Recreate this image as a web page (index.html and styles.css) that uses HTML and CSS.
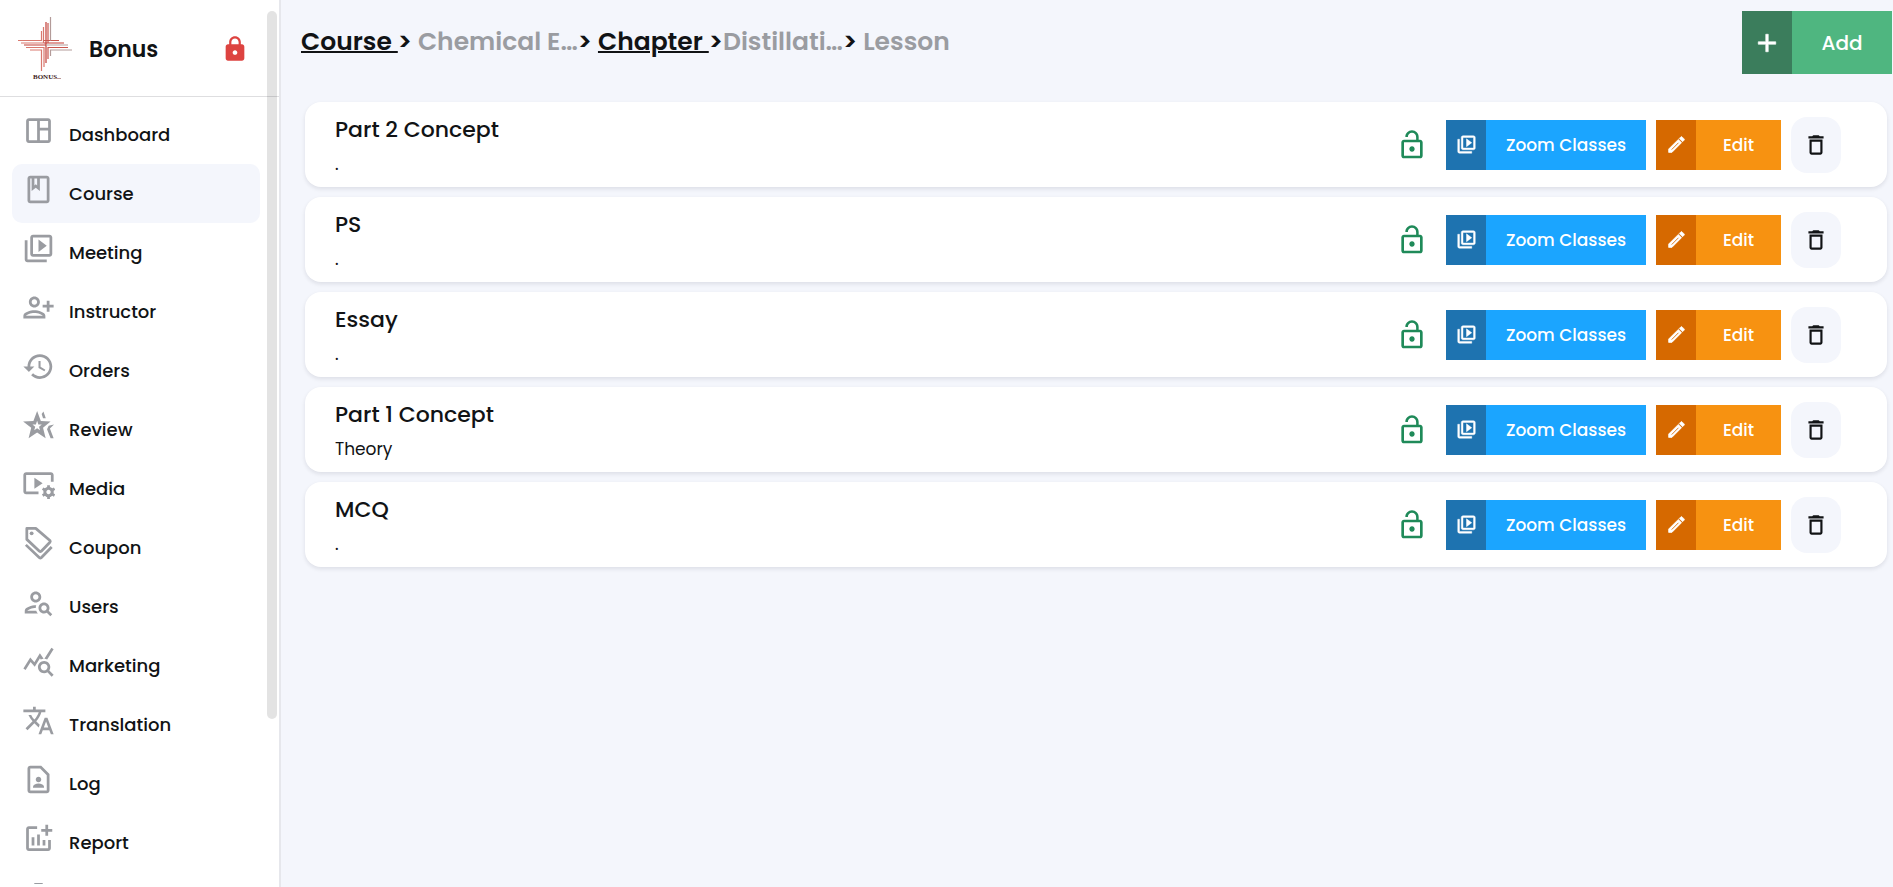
FILE: index.html
```html
<!DOCTYPE html>
<html lang="en">
	<head>
		<meta charset="UTF-8" />
		<meta name="viewport" content="width=device-width, initial-scale=1.0" />
		<title>Bonus - Lesson</title>
		<link rel="stylesheet" href="styles.css">
	</head>
	<body>
		<!-- Icon sprite -->
		<svg class="sprite" aria-hidden="true">
			<symbol id="i-dashboard" viewBox="0 0 24 24"><path d="M19 3H5c-1.100 0-2 .9-2 2v14c0 1.100.9 2 2 2h14c1.100 0 2-.9 2-2V5c0-1.100-.9-2-2-2zM5 19V5h6v14H5zm14 0h-6v-7h6v7zm0-9h-6V5h6v5z"/></symbol>
			<symbol id="i-course" viewBox="0 0 24 24"><path d="M18 2H6c-1.100 0-2 .9-2 2v16c0 1.100.9 2 2 2h12c1.100 0 2-.9 2-2V4c0-1.100-.9-2-2-2zM9 4h2v5l-1-.75L9 9V4zm9 16H6V4h1v9l3-2.250L13 13V4h5v16z"/></symbol>
			<symbol id="i-video" viewBox="0 0 24 24"><path d="M4 6H2v14c0 1.100.9 2 2 2h14v-2H4V6zm16-4H8c-1.100 0-2 .9-2 2v12c0 1.100.9 2 2 2h12c1.100 0 2-.9 2-2V4c0-1.100-.9-2-2-2zm0 14H8V4h12v12zM12 5.500v9l6-4.500z"/></symbol>
			<symbol id="i-person-add" viewBox="0 0 24 24"><path d="M9 12c2.210 0 4-1.790 4-4s-1.790-4-4-4-4 1.790-4 4 1.790 4 4 4zm0-6c1.100 0 2 .9 2 2s-.9 2-2 2-2-.9-2-2 .9-2 2-2zm0 8c-2.670 0-8 1.340-8 4v2h16v-2c0-2.660-5.330-4-8-4zm-6 4c.22-.72 3.310-2 6-2 2.700 0 5.800 1.290 6 2H3zM20 10V7h-2v3h-3v2h3v3h2v-3h3v-2z"/></symbol>
			<symbol id="i-history" viewBox="0 0 24 24"><path d="M13 3c-4.970 0-9 4.030-9 9H1l3.890 3.890.07.14L9 12H6c0-3.870 3.130-7 7-7s7 3.130 7 7-3.130 7-7 7c-1.930 0-3.680-.79-4.940-2.060l-1.420 1.420C8.270 19.990 10.510 21 13 21c4.970 0 9-4.030 9-9s-4.030-9-9-9zm-1 5v5l4.280 2.540.72-1.210-3.500-2.080V8H12z"/></symbol>
			<symbol id="i-review" viewBox="0 0 24 24"><path fill-rule="evenodd" d="M11 1.500l2.700 7.300 7.100.3-5.500 4.500 1.900 7.600-6.200-4.100-6.200 4.100 1.900-7.600L.8 9.100l7.500-.3zM11 8.600l-.9 2.600-2.500.1 2 1.600-.7 2.600 2.100-1.500 2.100 1.500-.7-2.600 2-1.600-2.500-.1z"/><path d="M14.300 3.700L15.600 1.800l1.700 4.900h-2zM23.300 11.300l-3 2.900 2.700 7h-2.200l-2.600-6.400 1.200-2.700z"/></symbol>
			<symbol id="i-media" viewBox="0 0 24 24"><path d="M21 3H3c-1.100 0-2 .9-2 2v12c0 1.100.9 2 2 2h9v-2H3V5h18v5h2V5c0-1.100-.9-2-2-2zM9 7v8l6-4z"/><path fill="none" stroke="currentColor" stroke-width="2.200" d="M22 17.500a2.700 2.700 0 1 1-5.400 0a2.700 2.700 0 1 1 5.400 0z"/><path fill="none" stroke="currentColor" stroke-width="2" d="M19.300 12.500v2M19.300 20.500v2M15 15l1.700 1M22 19l1.700 1M15 20l1.700-1M22 16l1.700-1"/></symbol>
			<symbol id="i-coupon" viewBox="0 0 24 24"><path fill="none" stroke="currentColor" stroke-width="2" stroke-linejoin="round" d="M3.500 1H10L20.300 9.800a1 1 0 0 1 0 1.300L14 17.600a1 1 0 0 1-1.300 0L3.500 9z"/><circle cx="7" cy="4.600" r="1.400"/><path fill="none" stroke="currentColor" stroke-width="2" d="M2.800 13l9.900 9.400a1 1 0 0 0 1.300 0l7.600-7.800"/></symbol>
			<symbol id="i-users" viewBox="0 0 24 24"><path d="M10 12c2.210 0 4-1.790 4-4s-1.790-4-4-4-4 1.790-4 4 1.790 4 4 4zm0-6c1.100 0 2 .9 2 2s-.9 2-2 2-2-.9-2-2 .9-2 2-2zM4 18c.22-.72 3.310-2 6-2 0-.7.130-1.370.350-1.990C7.620 13.910 2 15.270 2 18v2h9.540c-.52-.58-.93-1.250-1.190-2H4zm15.430.02c.36-.59.57-1.280.57-2.020 0-2.210-1.790-4-4-4s-4 1.790-4 4 1.790 4 4 4c.74 0 1.430-.22 2.020-.57L20.590 22 22 20.590l-2.570-2.570zM16 18c-1.100 0-2-.9-2-2s.9-2 2-2 2 .9 2 2-.9 2-2 2z"/></symbol>
			<symbol id="i-marketing" viewBox="0 0 24 24"><path d="M19.880 18.470c.44-.7.700-1.510.700-2.390 0-2.490-2.010-4.500-4.500-4.500s-4.500 2.010-4.500 4.500 2.010 4.500 4.490 4.500c.88 0 1.700-.26 2.390-.7L21.580 23 23 21.580l-3.120-3.110zm-3.800.11c-1.380 0-2.500-1.120-2.500-2.500s1.120-2.500 2.500-2.500 2.500 1.120 2.500 2.500-1.120 2.500-2.500 2.500zm-.36-8.500c-.74.02-1.450.18-2.100.45l-.55-.83-3.800 6.180-3.010-3.520-3.630 5.810L1 17l5-8 3 3.500L13 6l2.720 4.080zm2.590.5c-.64-.28-1.330-.45-2.050-.49L21.380 2 23 3.180l-4.690 7.400z"/></symbol>
			<symbol id="i-translate" viewBox="0 0 24 24"><path d="M12.870 15.070l-2.540-2.510.03-.03c1.740-1.940 2.980-4.170 3.710-6.530H17V4h-7V2H8v2H1v1.990h11.170C11.500 7.920 10.440 9.750 9 11.350 8.070 10.320 7.300 9.190 6.690 8h-2c.73 1.630 1.730 3.170 2.980 4.560l-5.090 5.020L4 19l5-5 3.110 3.110.76-2.040zM18.500 10h-2L12 22h2l1.120-3h4.750L21 22h2l-4.500-12zm-2.620 7l1.620-4.330L19.120 17h-3.240z"/></symbol>
			<symbol id="i-log" viewBox="0 0 24 24"><path d="M14 2H6c-1.100 0-2 .9-2 2v16c0 1.100.9 2 2 2h12c1.100 0 2-.9 2-2V8l-6-6zm4 18H6V4h7.170L18 8.830V20zM12 14c1.100 0 2-.9 2-2s-.9-2-2-2-2 .9-2 2 .9 2 2 2zm4 3.430c0-.81-.48-1.530-1.220-1.850a6.950 6.950 0 0 0-5.560 0A2.010 2.010 0 0 0 8 17.430V18h8v-.57z"/></symbol>
			<symbol id="i-report" viewBox="0 0 24 24"><path d="M22 5v2h-3v3h-2V7h-3V5h3V2h2v3h3zM19 19H5V5h6V3H5c-1.100 0-2 .9-2 2v14c0 1.100.9 2 2 2h14c1.100 0 2-.9 2-2v-6h-2v6zM15 13v4h2v-4h-2zm-4 4h2V9h-2v8zm-2 0v-6H7v6h2z"/></symbol>
			<symbol id="i-settings" viewBox="0 0 24 24"><path fill-rule="evenodd" d="M9 1.500h6l.5 3 2 1.200 2.800-1.100 2.500 4.300-2.300 1.900v2.400l2.300 1.900-2.500 4.300-2.800-1.100-2 1.200-.5 3H9l-.5-3-2-1.200-2.800 1.100-2.500-4.300 2.300-1.900v-2.400L1.200 8.900l2.500-4.300 2.800 1.100 2-1.200zM12 8a4 4 0 1 0 0 8 4 4 0 0 0 0-8z"/></symbol>
			<symbol id="i-lock" viewBox="0 0 24 24"><path d="M18 8h-1V6c0-2.760-2.240-5-5-5S7 3.240 7 6v2H6c-1.100 0-2 .9-2 2v10c0 1.100.9 2 2 2h12c1.100 0 2-.9 2-2V10c0-1.100-.9-2-2-2zm-6 9c-1.100 0-2-.9-2-2s.9-2 2-2 2 .9 2 2-.9 2-2 2zm3.100-9H8.900V6c0-1.710 1.390-3.100 3.100-3.100s3.100 1.390 3.100 3.100v2z"/></symbol>
			<symbol id="i-unlock" viewBox="0 0 24 24"><path d="M12 17c1.100 0 2-.9 2-2s-.9-2-2-2-2 .9-2 2 .9 2 2 2zm6-9h-1V6c0-2.760-2.240-5-5-5S7 3.240 7 6h1.900c0-1.710 1.390-3.100 3.100-3.100s3.100 1.390 3.100 3.100v2H6c-1.100 0-2 .9-2 2v10c0 1.100.9 2 2 2h12c1.100 0 2-.9 2-2V10c0-1.100-.9-2-2-2zm0 12H6V10h12v10z"/></symbol>
			<symbol id="i-edit" viewBox="0 0 24 24"><path stroke="currentColor" stroke-width=".8" stroke-linejoin="round" d="M3 17.250V21h3.750L17.810 9.940l-3.750-3.750L3 17.250zM20.710 7.040a1 1 0 0 0 0-1.410l-2.340-2.340a1 1 0 0 0-1.410 0l-1.830 1.830 3.750 3.750 1.830-1.830z"/><path stroke="#d66900" stroke-width="1" d="M6.500 17.800L14.300 10"/></symbol>
			<symbol id="i-delete" viewBox="0 0 24 24"><path d="M6 19c0 1.100.9 2 2 2h8c1.100 0 2-.9 2-2V7H6v12zM8 9h8v10H8V9zm7.500-5l-1-1h-5l-1 1H5v2h14V4h-3.500z"/></symbol>
			<symbol id="i-add" viewBox="0 0 24 24"><path d="M19 13h-6v6h-2v-6H5v-2h6V5h2v6h6v2z"/></symbol>
		</svg>

		<div class="layout">
			<aside class="sidebar">
				<div class="brand">
					<svg class="brand-logo" viewBox="0 0 56 64" role="img" aria-label="Bonus">
						<g fill="none" stroke-width="1.200">
							<path stroke="#d9786e" d="M0 23.500H23.500V14M3 26H25.500V10M23.500 54V33H12M26 50V30.500H8"/>
							<path stroke="#c23f37" d="M6 28H28V5M28 46V28H6M26 26H46"/>
							<path stroke="#c9574e" d="M25.500 23.500H41M30 42V30.500H50M30 6V26"/>
							<path stroke="#b39b99" d="M32.500 0V23.500M32.500 39V33H54M28 28H50"/>
						</g>
						<text class="logo-text" x="15" y="62">BONUS</text>
						<path stroke="#b99" stroke-width="1" d="M38 61.500h5"/>
					</svg>
					<span class="brand-name">Bonus</span>
					<button class="lock-btn" type="button" aria-label="Lock"><svg class="icon"><use href="#i-lock"/></svg></button>
				</div>
				<nav class="menu">
					<a href="#"><svg class="icon"><use href="#i-dashboard"/></svg><span>Dashboard</span></a>
					<a href="#" class="active"><svg class="icon"><use href="#i-course"/></svg><span>Course</span></a>
					<a href="#"><svg class="icon"><use href="#i-video"/></svg><span>Meeting</span></a>
					<a href="#"><svg class="icon"><use href="#i-person-add"/></svg><span>Instructor</span></a>
					<a href="#"><svg class="icon"><use href="#i-history"/></svg><span>Orders</span></a>
					<a href="#"><svg class="icon"><use href="#i-review"/></svg><span>Review</span></a>
					<a href="#"><svg class="icon"><use href="#i-media"/></svg><span>Media</span></a>
					<a href="#"><svg class="icon"><use href="#i-coupon"/></svg><span>Coupon</span></a>
					<a href="#"><svg class="icon"><use href="#i-users"/></svg><span>Users</span></a>
					<a href="#"><svg class="icon"><use href="#i-marketing"/></svg><span>Marketing</span></a>
					<a href="#"><svg class="icon"><use href="#i-translate"/></svg><span>Translation</span></a>
					<a href="#"><svg class="icon"><use href="#i-log"/></svg><span>Log</span></a>
					<a href="#"><svg class="icon"><use href="#i-report"/></svg><span>Report</span></a>
					<a href="#" aria-label="Settings"><svg class="icon"><use href="#i-settings"/></svg></a>
				</nav>
				<div class="scroll-thumb"></div>
			</aside>

			<main class="main">
				<header class="topbar">
					<h1 class="breadcrumb"><a href="#">Course&nbsp;</a>&gt; <span>Chemical E…</span>&gt; <a href="#">Chapter&nbsp;</a>&gt;<span>Distillati…</span>&gt; <span>Lesson</span></h1>
					<button class="btn btn-add" type="button">
						<span class="btn-icon"><svg class="icon"><use href="#i-add"/></svg></span>
						<span class="btn-text">Add</span>
					</button>
				</header>

				<section class="lessons" id="lessons"></section>
			</main>
		</div>

		<script>
			const lessons = [
				{ title: "Part 2 Concept", description: "." },
				{ title: "PS", description: "." },
				{ title: "Essay", description: "." },
				{ title: "Part 1 Concept", description: "Theory" },
				{ title: "MCQ", description: "." },
			];

			document.getElementById("lessons").innerHTML = lessons
				.map(
					(lesson) => `
					<article class="card">
						<div class="card-text">
							<h2>${lesson.title}</h2>
							<p>${lesson.description}</p>
						</div>
						<div class="card-actions">
							<button class="unlock-btn" type="button" aria-label="Unlocked"><svg class="icon"><use href="#i-unlock"/></svg></button>
							<button class="btn btn-zoom" type="button">
								<span class="btn-icon"><svg class="icon"><use href="#i-video"/></svg></span>
								<span class="btn-text">Zoom Classes</span>
							</button>
							<button class="btn btn-edit" type="button">
								<span class="btn-icon"><svg class="icon"><use href="#i-edit"/></svg></span>
								<span class="btn-text">Edit</span>
							</button>
							<button class="delete-btn" type="button" aria-label="Delete"><svg class="icon"><use href="#i-delete"/></svg></button>
						</div>
					</article>`
				)
				.join("");
		</script>
	</body>
</html>
```
FILE: styles.css
```css
* {
	box-sizing: border-box;
}

body {
	margin: 0;
	font-family: Poppins, Inter, "Open Sans", sans-serif;
	background-color: #f4f6fc;
	color: #111315;
}

button {
	font-family: inherit;
	border: none;
	background: none;
	padding: 0;
	cursor: pointer;
}

.sprite {
	display: none;
}

.icon {
	display: block;
	fill: currentColor;
}

.layout {
	display: flex;
	height: 100vh;
	overflow: hidden;
}

/* Sidebar */
.sidebar {
	position: relative;
	display: flex;
	flex: 0 0 281px;
	flex-direction: column;
	padding-bottom: 3px;
	background-color: #fff;
	border-right: 2px solid #e6e7ec;
}

.brand {
	display: flex;
	flex-shrink: 0;
	align-items: center;
	height: 97px;
	padding: 2px 30px 0 18px;
	border-bottom: 1px solid #dedee0;
}

.brand-logo {
	width: 56px;
	height: 64px;
}

.logo-text {
	font-family: "Liberation Serif", serif;
	font-size: 7px;
	font-weight: bold;
	fill: #3d1a1a;
}

.brand-name {
	flex: 1;
	margin-left: 15px;
	font-size: 22px;
	font-weight: 600;
}

.lock-btn {
	color: #dd4340;
}

.lock-btn .icon {
	width: 28px;
	height: 28px;
}

.menu {
	display: flex;
	flex-direction: column;
	min-height: 0;
	padding: 8px 19px 0 12px;
	overflow: hidden;
}

.menu a {
	display: flex;
	align-items: center;
	flex-shrink: 0;
	height: 59px;
	padding-left: 10px;
	gap: 14px;
	border-radius: 10px;
	color: #111315;
	font-size: 18px;
	font-weight: 500;
	text-decoration: none;
}

.menu a.active {
	background-color: #f4f6fc;
}

.menu .icon {
	width: 33px;
	height: 33px;
	margin-bottom: 8px;
	color: #9a9ca1;
}

.scroll-thumb {
	position: absolute;
	top: 11px;
	right: 2px;
	width: 10px;
	height: 708px;
	border-radius: 5px;
	background-color: rgba(0, 0, 0, 0.11);
}

/* Main area */
.main {
	flex: 1;
	min-width: 0;
	padding: 11px 1px 0 20px;
}

.topbar {
	display: flex;
	justify-content: space-between;
	align-items: flex-start;
}

.breadcrumb {
	margin: 0;
	font-size: 25px;
	font-weight: 600;
	line-height: 62px;
}

.breadcrumb a {
	color: inherit;
	text-decoration-thickness: 2px;
}

.breadcrumb span {
	color: #9a9ca1;
}

/* Split buttons: dark icon part + lighter label */
.btn {
	display: flex;
	align-items: stretch;
	height: 50px;
	color: #fff;
	font-size: 17px;
	font-weight: 500;
}

.btn-icon {
	display: flex;
	align-items: center;
	justify-content: center;
	width: 40px;
}

.btn-icon .icon {
	width: 21px;
	height: 21px;
	stroke: currentColor;
	stroke-width: 0.5;
}

.btn-text {
	display: flex;
	flex: 1;
	align-items: center;
	justify-content: center;
}

.btn-add {
	width: 150px;
	height: 63px;
	background-color: #4fb680;
	font-size: 20px;
}

.btn-add .btn-icon {
	width: 50px;
	background-color: #3b7d5c;
}

.btn-add .icon {
	width: 30px;
	height: 30px;
}

.btn-zoom {
	width: 200px;
	background-color: #1ba5ff;
}

.btn-zoom .btn-icon {
	background-color: #1e73b0;
}

.btn-edit {
	width: 125px;
	background-color: #f79211;
}

.btn-edit .btn-icon {
	background-color: #d66900;
}

/* Lesson cards */
.lessons {
	display: flex;
	flex-direction: column;
	gap: 10px;
	padding: 28px 5px 0 4px;
}

.card {
	display: flex;
	align-items: center;
	justify-content: space-between;
	height: 85px;
	padding: 0 46px 0 30px;
	border-radius: 16px;
	background-color: #fff;
	box-shadow: 0 2px 4px rgba(20, 20, 40, 0.1);
}

.card-text {
	padding-top: 4px;
}

.card h2 {
	margin: 0;
	font-size: 22px;
	font-weight: 500;
	line-height: 34px;
}

.card p {
	margin: 0;
	font-size: 17px;
	font-weight: 400;
	line-height: 34px;
}

.card-actions {
	display: flex;
	align-items: center;
	gap: 10px;
}

.unlock-btn {
	margin-right: 8px;
	color: #1f8a59;
}

.unlock-btn .icon {
	width: 32px;
	height: 32px;
}

.delete-btn {
	display: flex;
	align-items: center;
	justify-content: center;
	width: 50px;
	height: 56px;
	border-radius: 16px;
	background-color: #f4f6fc;
	color: #111315;
}

.delete-btn .icon {
	width: 26px;
	height: 26px;
}
```
